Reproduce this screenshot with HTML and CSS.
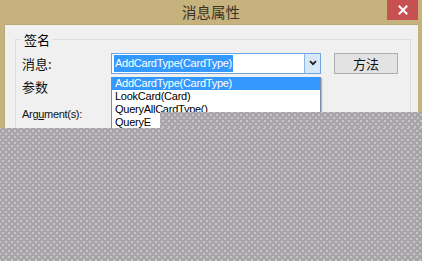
FILE: index.html
```html
<!DOCTYPE html>
<html lang="zh">
<head>
    <meta charset="UTF-8">
    <meta name="viewport" content="width=device-width, initial-scale=1.0">
    <title>消息属性</title>
    <link rel="stylesheet" href="styles.css">
</head>
<body>
    <div class="window">
        <div class="titlebar">
            <span class="title">消息属性</span>
            <div class="close">
                <svg width="10" height="10" viewBox="0 0 10 10">
                    <path d="M1.5 1.5 L8.5 8.5 M8.5 1.5 L1.5 8.5" stroke="#fff" stroke-width="2" stroke-linecap="square"/>
                </svg>
            </div>
        </div>
        <div class="client">
            <div class="group">
                <span class="group-title">签名</span>
                <div class="row row-message">
                    <span class="label">消息:</span>
                    <div class="combo">
                        <span class="combo-value"><span class="selected">AddCardType(CardType)</span></span>
                        <span class="combo-arrow">
                            <svg width="8" height="6" viewBox="0 0 8 6">
                                <path d="M1 1.2 L4 4.2 L7 1.2" fill="none" stroke="#1e1e1e" stroke-width="1.8"/>
                            </svg>
                        </span>
                    </div>
                    <button class="btn">方法</button>
                </div>
                <div class="row row-params">
                    <span class="label">参数</span>
                </div>
                <div class="row row-args">
                    <span class="label label-latin">Arg<u>u</u>ment(s):</span>
                </div>
            </div>
        </div>

        <ul class="dropdown">
            <li class="active">AddCardType(CardType)</li>
            <li>LookCard(Card)</li>
            <li>QueryAllCardType()</li>
            <li>QueryE</li>
        </ul>

        <div class="blank blank-right"></div>
        <div class="blank blank-bottom"></div>
    </div>
</body>
</html>
```

FILE: styles.css
```css
body {
    margin: 0;
    font-family: "Liberation Sans", "Noto Sans CJK SC", sans-serif;
    color: #000;
}
.window {
    position: relative;
    width: 422px;
    height: 261px;
    background: #c5b27d;
    display: flex;
    flex-direction: column;
    overflow: hidden;
}
.titlebar {
    height: 27px;
    display: grid;
    grid-template-columns: 1fr auto 1fr;
}
.title {
    grid-column: 2;
    font-family: "Noto Sans CJK SC", sans-serif;
    font-size: 14.5px;
    line-height: 24px;
    color: #3a3428;
}
.close {
    grid-column: 3;
    justify-self: end;
    width: 31px;
    height: 20px;
    margin-right: 4px;
    background: #c75050;
    display: flex;
    align-items: center;
    justify-content: center;
}
.client {
    flex: 1;
    margin: 0 4px;
    background: #f0f0f0;
    border-top: 1px solid #b9a774;
    border-left: 1px solid #b9a774;
    box-sizing: border-box;
}
.group {
    margin: 14px 7px 0 10px;
    height: 300px;
    border: 1px solid #dcdcdc;
    border-bottom: none;
    padding-left: 6px;
}
.group-title {
    display: block;
    width: fit-content;
    margin: -8px 0 0 -1px;
    padding: 0 3px;
    background: #f0f0f0;
    font-family: "Noto Sans CJK SC", sans-serif;
    font-size: 13px;
    line-height: 15px;
}
.row {
    display: flex;
    align-items: center;
    height: 20px;
}
.row-message {
    margin-top: 6px;
}
.row-params {
    margin-top: 3px;
}
.row-args {
    margin-top: 8px;
}
.label {
    width: 89px;
    flex: none;
    font-family: "Noto Sans CJK SC", sans-serif;
    font-size: 13px;
    color: #111;
}
.label-latin {
    font-family: "Liberation Sans", sans-serif;
    font-size: 11px;
    letter-spacing: -0.3px;
}
.combo {
    width: 210px;
    height: 21px;
    flex: none;
    box-sizing: border-box;
    border: 1px solid #6ea6e2;
    background: #fff;
    display: flex;
    align-items: stretch;
}
.combo-value {
    flex: 1;
    padding: 1px 0 1px 2px;
    display: flex;
}
.selected {
    background: #3399ff;
    color: #fff;
    font-size: 11px;
    letter-spacing: -0.25px;
    line-height: 17px;
    padding: 0 1px;
}
.combo-arrow {
    width: 15px;
    background: #d9e8f6;
    border-left: 1px solid #8ab6e4;
    display: flex;
    align-items: center;
    justify-content: center;
}
.btn {
    margin-left: 13px;
    width: 64px;
    height: 21px;
    flex: none;
    border: 1px solid #adadad;
    background: #e3e3e3;
    font-family: "Noto Sans CJK SC", sans-serif;
    font-size: 13px;
    line-height: 17px;
    color: #111;
    padding: 0;
}
.dropdown {
    position: absolute;
    left: 111px;
    top: 77px;
    width: 210px;
    height: 60px;
    margin: 0;
    padding: 0;
    list-style: none;
    box-sizing: border-box;
    background: #fff;
    border: 1px solid #7790ac;
    border-top: none;
    box-shadow: 1px 1px 1px rgba(0, 0, 0, 0.25);
}
.dropdown li {
    height: 13px;
    line-height: 13px;
    padding-left: 3px;
    font-size: 11px;
    letter-spacing: -0.25px;
    white-space: nowrap;
}
.dropdown li.active {
    background: #3399ff;
    color: #fff;
}
.blank {
    position: absolute;
    right: 0;
    bottom: 0;
    background-color: #a7a5a7;
    background-image:
        radial-gradient(circle, #c9c7c9 0.7px, transparent 0.8px),
        radial-gradient(circle, #c9c7c9 0.7px, transparent 0.8px);
    background-size: 6px 6px;
    background-position: 0 0, 3px 3px;
}
.blank-right {
    left: 160px;
    top: 112px;
}
.blank-bottom {
    left: 0;
    top: 128px;
}
```
